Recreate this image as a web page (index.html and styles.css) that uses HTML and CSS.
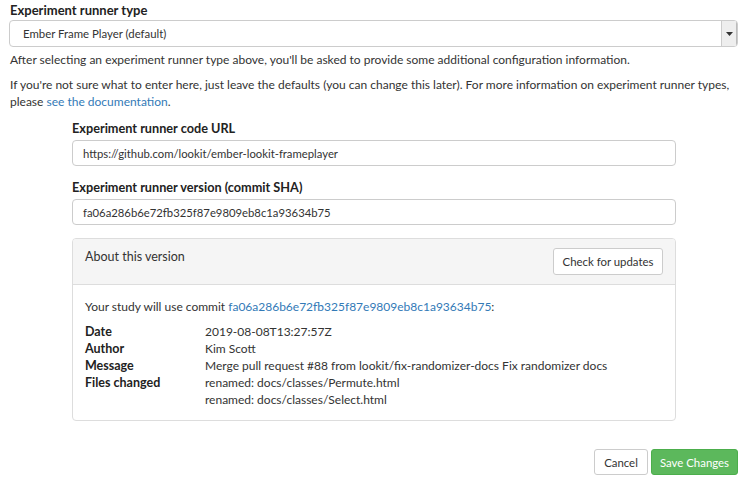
FILE: index.html
```html
<!DOCTYPE html>
<html>
<head>
<meta charset="utf-8">
<link rel="stylesheet" href="styles.css">
</head>
<body>
<div class="page">
  <div class="field">
    <div class="label">Experiment runner type</div>
    <div class="select">
      <span class="select-text">Ember Frame Player (default)</span>
      <span class="select-arrow"><svg width="7" height="4" viewBox="0 0 7 4"><path d="M0 0h7L3.5 4z" fill="#333"/></svg></span>
    </div>
  </div>
  <p class="help">After selecting an experiment runner type above, you'll be asked to provide some additional configuration information.</p>
  <p class="help">If you're not sure what to enter here, just leave the defaults (you can change this later). For more information on experiment runner types, please <a href="#">see the documentation</a>.</p>

  <div class="section">
    <div class="label">Experiment runner code URL</div>
    <div class="input">https://github.com/lookit/ember-lookit-frameplayer</div>
    <div class="label second">Experiment runner version (commit SHA)</div>
    <div class="input">fa06a286b6e72fb325f87e9809eb8c1a93634b75</div>

    <div class="panel">
      <div class="panel-head">
        <span class="panel-title">About this version</span>
        <span class="btn btn-check">Check for updates</span>
      </div>
      <div class="panel-body">
        <p class="commit">Your study will use commit <a href="#">fa06a286b6e72fb325f87e9809eb8c1a93634b75</a>:</p>
        <dl class="info">
          <dt>Date</dt><dd>2019-08-08T13:27:57Z</dd>
          <dt>Author</dt><dd>Kim Scott</dd>
          <dt>Message</dt><dd>Merge pull request #88 from lookit/fix-randomizer-docs Fix randomizer docs</dd>
          <dt>Files changed</dt><dd>renamed: docs/classes/Permute.html<br>renamed: docs/classes/Select.html</dd>
        </dl>
      </div>
    </div>
  </div>

  <div class="actions">
    <span class="btn btn-cancel">Cancel</span>
    <span class="btn btn-success">Save Changes</span>
  </div>
</div>
</body>
</html>
```

FILE: styles.css
```css
* { box-sizing: border-box; }
html, body { margin: 0; padding: 0; background: #fff; }
.page {
  padding: 2px 11px 0 9px;
  font-family: Lato, "Open Sans", sans-serif;
  font-size: 12px;
  line-height: 17px;
  color: #333;
}
a { color: #337ab7; text-decoration: none; }
.label {
  font-weight: 700;
  font-size: 13px;
  margin: 0 0 1px 1px;
  color: #222;
}
.select {
  display: flex;
  height: 27px;
  border: 1px solid #ccc;
  border-radius: 4px;
  align-items: stretch;
  overflow: hidden;
}
.select-text {
  flex: 1;
  padding: 4px 0 0 13px;
  font-size: 11.4px;
}
.select-arrow {
  width: 16px;
  background: #eee;
  border-left: 1px solid #ccc;
  box-shadow: inset -1px 0 0 #bbb;
  display: flex;
  align-items: center;
  justify-content: center;
}
.help {
  margin: 4px 0 8px 1px;
}
.help + .help { margin-top: 0; }
.section {
  margin: 10px 62px 0 63px;
}
.section .label { margin: 0 0 3px 0; font-size: 12.7px; }
.section .label.second { margin-top: 13px; }
.input {
  height: 26px;
  border: 1px solid #ccc;
  border-radius: 4px;
  padding: 4px 10px 0;
  font-size: 11.3px;
}
.panel {
  margin-top: 13px;
  border: 1px solid #ddd;
  border-radius: 4px;
  overflow: hidden;
}
.panel-head {
  background: #f5f5f5;
  border-bottom: 1px solid #ddd;
  height: 46px;
  padding: 9px 12px 0;
  display: flex;
  justify-content: space-between;
  align-items: flex-start;
}
.panel-title { font-size: 12.5px; padding-top: 0; }
.btn {
  display: inline-flex;
  align-items: center;
  justify-content: center;
  height: 27px;
  border: 1px solid #ccc;
  border-radius: 3px;
  background: #fff;
  font-size: 11.4px;
  color: #333;
}
.btn-check { width: 110px; }
.btn-cancel { width: 54px; height: 26px; }
.panel-body {
  padding: 13px 12px 12px;
}
.commit { margin: 0 0 8px; }
.info {
  display: grid;
  grid-template-columns: 120px 1fr;
  margin: 0;
}
.info dt { font-weight: 700; color: #222; font-size: 12.5px; }
.info dd { margin: 0; }
.actions {
  display: flex;
  justify-content: flex-end;
  gap: 3px;
  margin-top: 28px;
}
.btn-success {
  width: 87px;
  height: 26px;
  background: #5cb85c;
  border-color: #4cae4c;
  color: #fff;
}
```
